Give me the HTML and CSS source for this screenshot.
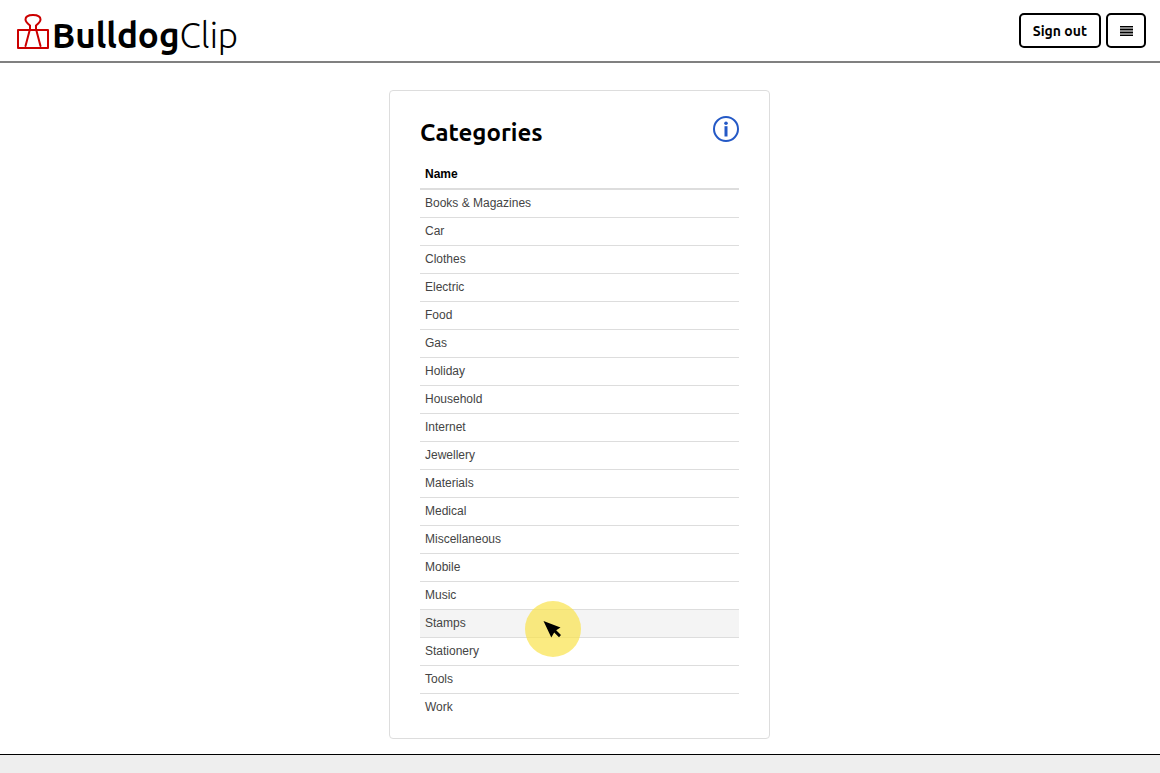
FILE: index.html
```
<!DOCTYPE html>
<html lang="en">
<head>
<meta charset="utf-8">
<title>BulldogClip - Categories</title>
<link rel="stylesheet" href="styles.css">
</head>
<body>
<header class="topbar">
  <a class="brand" href="#">
    <svg class="brand-icon" viewBox="0 0 34 37" aria-hidden="true">
      <path d="M2 17H32V35H2ZM9.500 33L14 16V12.500C11.500 10.500 9.500 9 9.500 6.500C9.500 3.500 12.500 2 17 2S24.500 3.500 24.500 6.500C24.500 9 22.500 10.500 20 12.500V16L24.500 33"/>
    </svg>
    <span class="brand-name"><span class="brand-bold">Bulldog</span><span class="brand-light">Clip</span></span>
  </a>
  <nav class="actions">
    <button class="btn" type="button">Sign out</button>
    <button class="btn btn-menu" type="button" aria-label="Menu">
      <svg class="menu-icon" viewBox="0 0 13 12" aria-hidden="true">
        <path class="menu-fill" d="M0 1H13V11H0Z"/>
        <path class="menu-lines" d="M0 1.500H13M0 4.500H13M0 7.500H13M0 10.500H13"/>
      </svg>
    </button>
  </nav>
</header>
<main class="content">
  <section class="card">
    <div class="card-head">
      <h1 class="title">Categories</h1>
      <a class="info" href="#" aria-label="Information">
        <svg class="info-icon" viewBox="0 0 26 26" aria-hidden="true">
          <circle class="info-ring" cx="13" cy="13" r="12"/>
          <circle cx="13" cy="7.200" r="1.800"/>
          <rect x="11.500" y="10.200" width="3" height="10.300"/>
        </svg>
      </a>
    </div>
    <table class="list">
      <thead><tr><th scope="col">Name</th></tr></thead>
      <tbody>
        <tr><td>Books &amp; Magazines</td></tr>
        <tr><td>Car</td></tr>
        <tr><td>Clothes</td></tr>
        <tr><td>Electric</td></tr>
        <tr><td>Food</td></tr>
        <tr><td>Gas</td></tr>
        <tr><td>Holiday</td></tr>
        <tr><td>Household</td></tr>
        <tr><td>Internet</td></tr>
        <tr><td>Jewellery</td></tr>
        <tr><td>Materials</td></tr>
        <tr><td>Medical</td></tr>
        <tr><td>Miscellaneous</td></tr>
        <tr><td>Mobile</td></tr>
        <tr><td>Music</td></tr>
        <tr class="active"><td>Stamps
          <svg class="pointer" viewBox="0 0 56 56" aria-hidden="true">
            <circle class="pointer-halo" cx="28" cy="28" r="28"/>
            <path d="M18.500 20L35.500 26.500L31.200 29.300L36 34L34 36.300L29.200 31.500L26.300 36.500Z"/>
          </svg>
        </td></tr>
        <tr><td>Stationery</td></tr>
        <tr><td>Tools</td></tr>
        <tr><td>Work</td></tr>
      </tbody>
    </table>
  </section>
</main>
<footer class="footer"></footer>
</body>
</html>
```
FILE: styles.css
```
* { box-sizing: border-box; }
body {
  margin: 0;
  min-height: 100vh;
  display: flex;
  flex-direction: column;
  background: #fff;
  color: #444;
  font: 12px/18px "Liberation Sans", Arial, sans-serif;
}
.topbar {
  display: flex;
  justify-content: space-between;
  align-items: flex-start;
  padding: 13px 14px 6px 16px;
  border-bottom: 2px solid #808080;
}
.brand {
  display: flex;
  align-items: flex-start;
  gap: 2px;
  color: #000;
  text-decoration: none;
}
.brand-icon {
  width: 34px;
  height: 37px;
  fill: none;
  stroke: #c00;
  stroke-width: 2;
  stroke-linejoin: round;
  stroke-linecap: round;
}
.brand-name {
  padding-top: 2px;
  font: 35px/40px Ubuntu, "Noto Sans", sans-serif;
}
.brand-bold { font-weight: 600; }
.brand-light { font-weight: 300; }
.actions { display: flex; gap: 5px; }
.btn {
  display: flex;
  align-items: center;
  justify-content: center;
  height: 35px;
  padding: 0 12px;
  border: 2px solid #000;
  border-radius: 5px;
  background: #fff;
  color: #000;
  font: 600 14px/20px Ubuntu, "Noto Sans", sans-serif;
}
.btn-menu { width: 40px; }
.menu-icon { width: 13px; height: 12px; flex: none; }
.menu-fill { fill: #888; }
.menu-lines { stroke: #000; stroke-width: 1; }
.content {
  flex: 1;
  display: flex;
  justify-content: center;
  align-items: flex-start;
  padding: 27px 17px 15px 16px;
}
.card {
  width: 100%;
  max-width: 381px;
  padding: 25px 30px 17px;
  border: 1px solid #ddd;
  border-radius: 4px;
}
.card-head {
  display: flex;
  justify-content: space-between;
  align-items: flex-start;
  height: 45px;
}
.title {
  margin: 0;
  color: #000;
  font: 600 24px/34px Ubuntu, "Noto Sans", sans-serif;
}
.info { display: block; }
.info-icon {
  display: block;
  width: 26px;
  height: 26px;
  fill: #2459c6;
}
.info-ring { fill: none; stroke: #2459c6; stroke-width: 2; }
.list {
  width: 100%;
  border-spacing: 0;
}
.list th, .list td {
  padding: 4px 5px 5px;
  text-align: left;
}
.list th { color: #000; border-bottom: 2px solid #ddd; }
.list tr + tr td { border-top: 1px solid #ddd; }
.list .active td { position: relative; background: #f4f4f4; }
.pointer {
  position: absolute;
  left: 105px;
  top: -9px;
  width: 56px;
  height: 56px;
  z-index: 1;
}
.pointer-halo { fill: #fae34b; fill-opacity: .7; }
.footer {
  height: 19px;
  border-top: 1px solid #000;
  background: #eee;
}
```
